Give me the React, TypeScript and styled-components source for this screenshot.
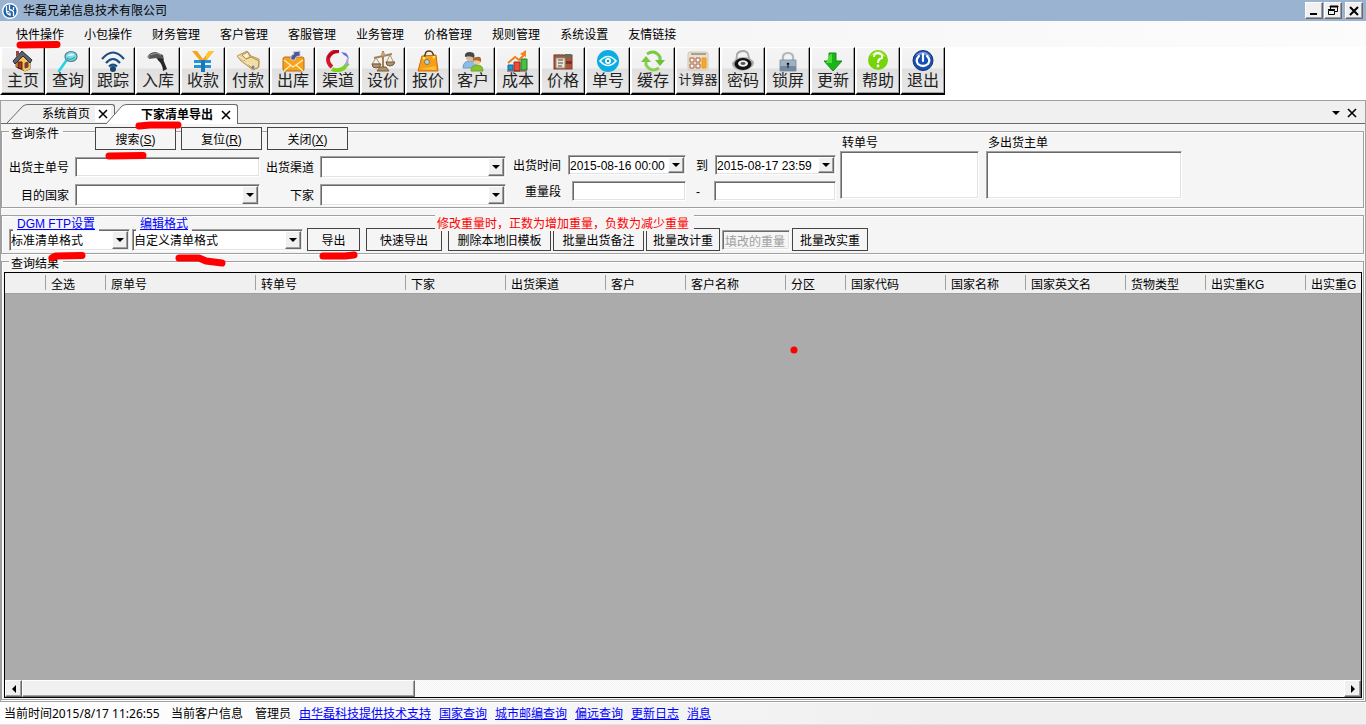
import React from "react";
import styled, { createGlobalStyle, css } from "styled-components";

const formFont = '"Liberation Sans", "Noto Sans CJK SC", sans-serif';
const chromeFont = '"Noto Sans", "Noto Sans CJK SC", sans-serif';

const GlobalStyle = createGlobalStyle`
  *, *::before, *::after { box-sizing: border-box; }
  body { margin: 0; background: #f5f5f5; }
  button, input, select, textarea { font: inherit; color: inherit; border-radius: 0; margin: 0; outline-offset: -3px; }
`;

const sunken = css`
  border: 1px solid;
  border-color: #a0a0a0 #fff #fff #a0a0a0;
  box-shadow: inset 1px 1px #696969, inset -1px -1px #e3e3e3;
  background: #fff;
`;

const raised = css`
  border: 1px solid;
  border-color: #fff #696969 #696969 #fff;
  box-shadow: inset -1px -1px #a0a0a0;
  background: #f0f0f0;
`;

const Window = styled.div`
  position: relative;
  display: flex;
  flex-direction: column;
  min-height: 100vh;
  overflow: hidden;
  background: #fff;
  color: #000;
  font: 12px/14px ${formFont};
  white-space: nowrap;
`;

const TitleBar = styled.header`
  display: flex;
  align-items: center;
  height: 21px;
  padding: 0 3px 0 2px;
  gap: 5px;
  background: #99b3d0;
  font-family: ${chromeFont};
`;

const Title = styled.h1`
  flex: 1;
  margin: 0;
  font-size: 12px;
  font-weight: 400;
`;

const WindowControls = styled.div`
  display: flex;
  gap: 1px;
  & > :last-child { margin-left: 2px; }
`;

const WindowButton = styled.button`
  ${raised}
  display: grid;
  place-items: center;
  width: 18px;
  height: 17px;
  padding: 0;
`;

const MenuBar = styled.nav`
  display: flex;
  align-items: center;
  height: 26px;
  padding: 2px 6px 0;
  background: linear-gradient(90deg, #f0f0f0, #fcfcfc);
  font-family: ${chromeFont};
`;

const MenuItem = styled.button`
  padding: 0 10px;
  border: 0;
  background: none;
`;

const ToolBar = styled.div`
  display: flex;
  height: 53px;
  background: #fff;
`;

const ToolButton = styled.button`
  display: flex;
  flex-direction: column;
  align-items: center;
  width: 45px;
  height: 48px;
  padding: 2px 0 0;
  border: solid;
  border-width: 1px 1px 2px 2px;
  border-color: #fff #000 #000 #fff;
  box-shadow: inset -1px -1px #a0a0a0;
  background: linear-gradient(#f4f4f4 0, #f1f1f1 20px, #e0e0e0 21px, #e8e8e8 100%);
`;

const ToolLabel = styled.span<{ $small?: boolean }>`
  font-family: "Noto Sans CJK SC", sans-serif;
  font-size: ${(p) => (p.$small ? 13 : 16)}px;
  line-height: ${(p) => (p.$small ? 14 : 15)}px;
  color: #222;
`;

const Workspace = styled.main`
  display: flex;
  flex: 1;
  flex-direction: column;
  border: 1px solid #a0a0a0;
  background: #f5f5f5;
`;

const TabStrip = styled.div`
  display: flex;
  align-items: flex-end;
  height: 23px;
  padding-left: 6px;
  background: #f0f0f0;
  border-bottom: 1px solid #696969;
`;

const Tab = styled.div<{ $active?: boolean }>`
  display: flex;
  height: ${(p) => (p.$active ? 20 : 19)}px;
  margin-bottom: ${(p) => (p.$active ? -1 : 0)}px;
  margin-left: ${(p) => (p.$active ? -9 : 0)}px;
  font-weight: ${(p) => (p.$active ? 700 : 400)};
  --tab-fill: ${(p) => (p.$active ? "#fff" : "#f0f0f0")};
`;

const TabBody = styled.div`
  display: flex;
  align-items: center;
  padding: 0 3px 0 14px;
  gap: 5px;
  border: 1px solid #696969;
  border-width: 1px 1px 0 0;
  border-top-right-radius: 3px;
  background: var(--tab-fill);
`;

const TabLabel = styled.button`
  padding: 0;
  border: 0;
  background: none;
  font-weight: inherit;
`;

const GlyphButton = styled.button`
  display: grid;
  place-items: center;
  width: 16px;
  height: 16px;
  padding: 0;
  border: 0;
  background: none;
`;

const TabClose = styled(GlyphButton)`
  background: #fff;
`;

const StripActions = styled.div`
  display: flex;
  align-items: center;
  align-self: center;
  margin-left: auto;
  padding: 2px 5px 0 0;
`;

const groupEdge = css`
  min-width: 0;
  border: 1px solid #a0a0a0;
  box-shadow: 1px 1px #fff, inset 1px 1px #fff;
`;

const Group = styled.fieldset`
  ${groupEdge}
  margin: 0 1px 0 0;
  padding: 0;
`;

const Legend = styled.legend`
  height: 15px;
  margin-left: 7px;
  padding: 4px 4px 0 2px;
  line-height: 12px;
`;

const SearchForm = styled.form`
  display: flex;
  align-items: flex-start;
  margin-top: -12px;
  padding: 0 0 1px 7px;
`;

const ActionRow = styled.div`
  display: flex;
  gap: 5px;
  margin: 0 0 6px 86px;
`;

const PushButton = styled.button<{ $width: number }>`
  width: ${(p) => p.$width}px;
  height: 23px;
  padding: 2px 0 0;
  border: 1px solid #444;
  background: #f5f5f5;
  text-align: center;
`;

const CriteriaGrid = styled.div`
  display: grid;
  grid-template-columns: 60px 185px 48px 186px;
  grid-auto-rows: 22px;
  align-items: center;
  gap: 6px;
  & > label { padding-top: 2px; text-align: right; }
`;

const RangeColumn = styled.div`
  display: flex;
  flex-direction: column;
  gap: 6px;
  margin: 28px 0 0 6px;
`;

const RangeRow = styled.div`
  display: grid;
  grid-template-columns: 49px 118px 1fr auto;
  align-items: center;
  column-gap: 7px;
  width: 324px;
  & > input:nth-of-type(1) { justify-self: end; }
`;

const RangeLabel = styled.label`
  padding-top: 2px;
  text-align: right;
`;

const RangeMark = styled.span`
  padding: 2px 0 0 3px;
`;

const TextBox = styled.input<{ $width: number }>`
  ${sunken}
  width: ${(p) => p.$width}px;
  height: 20px;
  padding: 1px 2px 0;
  &:disabled { background: #f5f5f5; color: #a0a0a0; }
`;

const ComboFrame = styled.span<{ $width: number; $height: number }>`
  ${sunken}
  display: flex;
  position: relative;
  width: ${(p) => p.$width}px;
  height: ${(p) => p.$height}px;
  padding: 1px;
`;

const ComboSelect = styled.select`
  appearance: none;
  flex: 1;
  min-width: 0;
  padding: 1px 0 0;
  border: 0;
  background: none;
`;

const ComboInput = styled.input`
  flex: 1;
  min-width: 0;
  padding: 1px 0 0;
  border: 0;
  background: none;
`;

const DropButton = styled.span`
  ${raised}
  position: absolute;
  top: 1px;
  right: 1px;
  bottom: 1px;
  display: grid;
  place-items: center;
  width: 16px;
  pointer-events: none;
`;

const MemoField = styled.label`
  display: flex;
  flex-direction: column;
  gap: 1px;
  padding-top: 9px;
  margin-left: 4px;
  & + & { margin-left: 7px; }
  span { padding-left: 2px; }
`;

const Memo = styled.textarea<{ $width: number }>`
  ${sunken}
  width: ${(p) => p.$width}px;
  height: 48px;
  padding: 2px;
  resize: none;
`;

const ExportGroup = styled(Group)`
  margin-top: 7px;
`;

const ExportRow = styled.div`
  display: flex;
  gap: 2px;
  padding: 0 0 2px 7px;
`;

const ExportField = styled.div`
  display: flex;
  flex-direction: column;
`;

const Caption = styled.div`
  position: relative;
  z-index: 1;
  align-self: flex-start;
  height: 15px;
  margin: 0 0 -2px 4px;
  padding: 0 4px;
  background: #f5f5f5;
  line-height: 17px;
`;

const Notice = styled.p`
  position: relative;
  z-index: 1;
  align-self: flex-start;
  height: 16px;
  margin: -1px 0 -2px 130px;
  padding: 0 5px 0 2px;
  background: #f5f5f5;
  color: #f00;
  line-height: 18px;
`;

const Actions = styled.div`
  display: flex;
  gap: 6px;
  margin: -1px 0 0 2px;
`;

const EditActions = styled.div`
  display: flex;
  align-items: center;
  gap: 2px;
`;

const Link = styled.a`
  color: #00f;
  text-decoration: underline;
`;

const ResultPanel = styled.section`
  ${groupEdge}
  display: flex;
  flex: 1;
  flex-direction: column;
  margin: 7px 1px 1px 0;
  padding: 0 1px 1px 2px;
`;

const ResultTitle = styled.h2`
  align-self: flex-start;
  height: 15px;
  margin: -5px 0 0 5px;
  padding: 0 4px 0 2px;
  background: #f5f5f5;
  font-size: 12px;
  font-weight: 400;
  line-height: 14px;
`;

const GridFrame = styled.div`
  display: flex;
  flex: 1;
  flex-direction: column;
  min-width: 0;
  border: 1px solid #000;
  background: #ababab;
`;

const GridViewport = styled.div`
  flex: 1;
  overflow: hidden;
`;

const DataTable = styled.table`
  width: 1402px;
  table-layout: fixed;
  border-collapse: collapse;
`;

const HeadCell = styled.th<{ $width: number }>`
  width: ${(p) => p.$width}px;
  height: 20px;
  padding: 4px 0 0 5px;
  border-bottom: 1px solid #a0a0a0;
  background: linear-gradient(#a0a0a0, #a0a0a0) right center / 1px 15px no-repeat #f0f0f0;
  font-weight: 400;
  text-align: left;
`;

const ScrollBar = styled.div`
  display: flex;
  height: 17px;
  background: repeating-conic-gradient(#f0f0f0 0 25%, #fff 0 50%) 0 0 / 2px 2px;
`;

const ScrollArrow = styled.button`
  ${raised}
  display: grid;
  place-items: center;
  width: 17px;
  padding: 0;
`;

const ScrollThumb = styled.div`
  ${raised}
  width: 29%;
  margin-right: auto;
`;

const StatusBar = styled.footer`
  display: flex;
  align-items: center;
  height: 23px;
  padding: 1px 4px 0;
  gap: 8px;
  border-top: 1px solid #fff;
  border-bottom: 1px solid #e0e0e0;
  background: linear-gradient(90deg, #fff, #efefef 70%);
  font-family: ${chromeFont};
`;

const StatusText = styled.span<{ $width: number }>`
  width: ${(p) => p.$width}px;
`;

const Markup = styled.svg`
  position: absolute;
  inset: 0;
  z-index: 2;
  width: 100%;
  height: 100%;
  pointer-events: none;
`;

const CloseGlyph = () => (
  <svg width="10" height="10" viewBox="0 0 10 10" aria-hidden="true">
    <path d="M1 1l8 8M9 1l-8 8" stroke="#000" strokeWidth="1.6" fill="none" />
  </svg>
);

const DownGlyph = () => (
  <svg width="8" height="4" viewBox="0 0 8 4" aria-hidden="true">
    <path d="M0 0h8L4 4z" />
  </svg>
);

const icons: Record<string, React.ReactNode> = {
  home: (
    <>
      <path d="M5 10l7-7 7 7v9l-5 2-9-4z" fill="#f6c64c" stroke="#7b4b16" />
      <path d="M12 4l7 6v9l-6 3V11z" fill="#f3c65a" />
      <path d="M2 11L11 1l10 9-2 3-7-7-8 8z" fill="#5d6070" stroke="#292c38" />
      <path d="M5 4V1h3v3L5 7z" fill="#984636" />
      <path d="M7 12h4v7l-4-1z" fill="#a8352c" stroke="#5c1a19" />
      <path d="M14 13l3-1v5l-3 1z" fill="#5d4260" stroke="#7d3b2a" />
    </>
  ),
  search: (
    <>
      <path d="M10 11L3 21" stroke="#21d3e9" strokeWidth="2.6" strokeLinecap="round" />
      <ellipse cx="15" cy="6.500" rx="6" ry="5" fill="#75dce2" stroke="#5b7b8e" strokeWidth="1.2" />
      <path d="M11 6q4-4 8-1-4 1-8 1z" fill="#d5ffff" />
      <path d="M11 8q4 3 8-1" stroke="#249aad" fill="none" />
    </>
  ),
  wifi: (
    <>
      <path d="M1 9q11-13 22 0M5 13q7-8 14 0M8 16.500q4-4 8 0" fill="none" stroke="#1a4d82" strokeWidth="2.2" />
      <circle cx="12" cy="19" r="3" fill="#164675" />
    </>
  ),
  scanner: (
    <>
      <path d="M2 6q2-4 8-4l7 3 1 5-5 1-3-3-7 1z" fill="#555" />
      <path d="M12 8l5 1 4 10-4 2q0-6-5-11z" fill="#262626" />
      <path d="M4 5l7-2 4 2" fill="none" stroke="#999" />
      <path d="M1 7l3-2v4z" fill="#777" />
    </>
  ),
  yuan: (
    <>
      <path d="M1 1h5l6 8 6-8h5l-9 11h-4z" fill="#f5a41c" />
      <path d="M15 5l3-4h5l-8 9z" fill="#ffc62f" />
      <path d="M3 10h17v3H3zM3 15h17v3H3z" fill="#2494d4" />
      <path d="M10 10h4v12h-4z" fill="#1878ba" />
    </>
  ),
  pay: (
    <>
      <path d="M1 6l10-5 4 5 8 3v8l-6 3L5 11z" fill="#e8cc8f" stroke="#bd9558" />
      <path d="M6 5l6-3 2 5-4 2z" fill="#f8edcc" stroke="#ad8d5f" />
      <path d="M8 10l7-3 8 4-1 7-5 1z" fill="#f0dfa5" stroke="#b1914a" />
      <path d="M2 6l8 4M8 11l9 6" stroke="#fff2cd" />
      <circle cx="17" cy="17" r="1.5" fill="#6d82a5" />
    </>
  ),
  mail: (
    <>
      <rect x="2" y="7" width="21" height="14" rx="2" fill="#f7a21b" stroke="#b86b14" />
      <path d="M3 10l9 7 10-7M3 21l7-6M22 21l-7-6" fill="none" stroke="#fff0ba" strokeWidth="1.2" />
      <path d="M10 10q-1-5 3-6l-1-2 7-1v6l-2-1q-3 1-3 4z" fill="#53558f" stroke="#c9d0ee" />
    </>
  ),
  ring: (
    <>
      <path d="M13 1Q4 1 2 9q0 5 4 8" fill="none" stroke="#d6162a" strokeWidth="4" />
      <path d="M6 19q5 3 12-1l4-5" fill="none" stroke="#7bd321" strokeWidth="4" />
      <path d="M15 2l5 1q3 3 3 7-2-4-5-5z" fill="#686ce1" />
      <path d="M21 8q3 3 0 7l-2 3q0-5 2-10z" fill="#a9a2ea" />
      <path d="M2 8q3-6 11-7" fill="none" stroke="#ac0822" strokeWidth="2" />
    </>
  ),
  scale: (
    <>
      <path d="M12 1v17M3 8l18-4" fill="none" stroke="#a28358" strokeWidth="2" />
      <circle cx="12" cy="4" r="2" fill="#c4a471" />
      <path d="M5 8l-4 6h8zM19 5l-4 8h8z" fill="none" stroke="#af926c" />
      <path d="M1 14h9q-1 4-5 4t-4-4zM15 12h9q-1 4-5 4t-4-4zM9 17h6l3 4H6z" fill="#b19369" stroke="#77593b" />
    </>
  ),
  bag: (
    <>
      <path d="M6 6l14-1 2 16H2z" fill="#f79e16" stroke="#c76b0b" />
      <path d="M8 8l2-6q3-2 6 0l3 6" fill="none" stroke="#533d22" strokeWidth="1.5" />
      <circle cx="8" cy="8" r="1.5" fill="#ffe94f" />
      <circle cx="18" cy="7" r="1.5" fill="#ffe94f" />
      <circle cx="11" cy="12" r="2.5" fill="#c5d3ca" stroke="#657d82" />
      <path d="M5 19l15-3v4z" fill="#ffc12d" />
    </>
  ),
  users: (
    <>
      <path d="M2 18q0-7 7-7t7 7z" fill="#8dbce6" stroke="#629bcb" />
      <circle cx="9" cy="7" r="4.2" fill="#e3b88f" />
      <path d="M4 7q-1-5 5-5 6 0 4 6-4-3-9-1z" fill="#46474c" />
      <path d="M10 21q0-6 6-6t6 6z" fill="#84c32c" stroke="#69a52c" />
      <circle cx="16" cy="11" r="3.6" fill="#efc89a" />
      <path d="M12 11q-1-4 4-4 5-1 4 5-4-3-8-1z" fill="#a36a33" />
    </>
  ),
  chart: (
    <>
      <path d="M2 15h5v5H2z" fill="#2594cf" stroke="#096a9f" />
      <path d="M8 12h6v9H8z" fill="#e94f37" stroke="#9b231e" />
      <path d="M15 9h6v11h-6z" fill="#4dbd45" stroke="#187d29" />
      <path d="M2 13l7-6 4 3 6-6" fill="none" stroke="#ef7e19" strokeWidth="2" />
      <path d="M14 4l6-4v7z" fill="#f28521" />
      <path d="M1 21h20" stroke="#6e3b32" />
    </>
  ),
  board: (
    <>
      <rect x="3" y="5" width="18" height="14" fill="#a9573b" stroke="#8a3228" />
      <path d="M5 8h9v10H5z" fill="#ece5d7" stroke="#9d8c75" />
      <path d="M7 10h5M7 13h5M7 16h4" stroke="#464642" />
      <path d="M5 4v3M8 4v3M11 4v3" stroke="#5f756e" />
      <path d="M14 4h6v3h-6z" fill="#4c7763" />
      <path d="M15 11h6v3h-6z" fill="#7a2f26" />
    </>
  ),
  eye: (
    <>
      <circle cx="12" cy="11" r="11" fill="#0bade3" />
      <path d="M4 11q8-9 16 0-8 9-16 0z" fill="none" stroke="#fff" strokeWidth="1.7" />
      <circle cx="12" cy="11" r="3" fill="#fff" />
      <circle cx="12" cy="11" r="1.2" fill="#0d8fc2" />
    </>
  ),
  refresh: (
    <>
      <path d="M6 4q8-5 13 3v4" fill="none" stroke="#7ac943" strokeWidth="3" />
      <path d="M14 10h10l-5 6z" fill="#6fbe38" />
      <path d="M18 18q-8 5-13-3v-4" fill="none" stroke="#8bd14f" strokeWidth="3" />
      <path d="M0 12h10L5 6z" fill="#7cc644" />
    </>
  ),
  calc: (
    <>
      <rect x="2" y="2" width="20" height="18" rx="2" fill="#e9e0d0" stroke="#d3c8b4" />
      <path d="M5 3h15v2H5z" fill="#a8a18d" />
      <path d="M4 8h4v4H4zM10 8h4v4h-4zM4 14h4v4H4zM10 14h4v4h-4z" fill="#fff5ed" stroke="#a75f4b" />
      <path d="M16 8h4v10h-4z" fill="#f6aa20" stroke="#e89a20" />
    </>
  ),
  combolock: (
    <>
      <path d="M5 13l1-9q2-3 6-3t5 3l2 8" fill="none" stroke="#a8a8a8" strokeWidth="1.8" />
      <path d="M1 13q4-6 11-6t11 5q0 4-4 6-7 5-14 1-4-2-4-6z" fill="#aaa" />
      <ellipse cx="12" cy="14" rx="8.500" ry="6" fill="#111" />
      <ellipse cx="12" cy="13.500" rx="5" ry="3.200" fill="#eee" />
      <ellipse cx="12" cy="13.500" rx="2.500" ry="1.400" fill="#555" />
    </>
  ),
  lock: (
    <>
      <path d="M7 10V6q1-3 5-3t5 3v4" fill="none" stroke="#b5b8ba" strokeWidth="2.2" />
      <path d="M4 10h16v11H4z" fill="#9db1c2" stroke="#8899a6" />
      <path d="M4 16h16v5H4z" fill="#7389a0" />
      <circle cx="12" cy="14" r="1.3" />
      <path d="M12 14v4" stroke="#303b42" strokeWidth="1.5" />
    </>
  ),
  down: (
    <>
      <path d="M8 3h7v8h6l-9 10-9-10h5z" fill="#18b61a" stroke="#1a891d" />
      <path d="M9 4h2v9H5z" fill="#50dc34" />
    </>
  ),
  help: (
    <>
      <circle cx="12" cy="10" r="10" fill="#76d40c" />
      <path d="M4 6Q13-4 20 7 12 2 4 6z" fill="#baf04b" />
      <path d="M8 7q0-4 4-4 5 1 4 5-4 1-4 5" fill="none" stroke="#fff" strokeWidth="2" />
      <circle cx="12" cy="16" r="1.4" fill="#fff" />
    </>
  ),
  power: (
    <>
      <circle cx="12" cy="10.500" r="10" fill="#174fb4" stroke="#173269" />
      <path d="M4 6Q13-3 20 7 12 3 4 6z" fill="#779bdf" />
      <path d="M8 6q-4 4-1 8 5 4 10 0 3-4-1-8M12 4v7" fill="none" stroke="#fff" strokeWidth="2.2" strokeLinecap="round" />
    </>
  ),
};

const menus = ["快件操作", "小包操作", "财务管理", "客户管理", "客服管理", "业务管理", "价格管理", "规则管理", "系统设置", "友情链接"];

const tools: [string, string][] = [
  ["主页", "home"], ["查询", "search"], ["跟踪", "wifi"], ["入库", "scanner"], ["收款", "yuan"], ["付款", "pay"], ["出库", "mail"],
  ["渠道", "ring"], ["设价", "scale"], ["报价", "bag"], ["客户", "users"], ["成本", "chart"], ["价格", "board"], ["单号", "eye"],
  ["缓存", "refresh"], ["计算器", "calc"], ["密码", "combolock"], ["锁屏", "lock"], ["更新", "down"], ["帮助", "help"], ["退出", "power"],
];

const columns: [string, number][] = [
  ["", 41], ["全选", 60], ["原单号", 150], ["转单号", 150], ["下家", 100], ["出货渠道", 100], ["客户", 80], ["客户名称", 100], ["分区", 60],
  ["国家代码", 100], ["国家名称", 80], ["国家英文名", 100], ["货物类型", 80], ["出实重KG", 100], ["出实重G", 101],
];

const footerLinks = ["由华磊科技提供技术支持", "国家查询", "城市邮编查询", "偏远查询", "更新日志", "消息"];

function Combo({ id, width, height = 22, value, label }: { id?: string; width: number; height?: number; value?: string; label?: string }) {
  return (
    <ComboFrame $width={width} $height={height}>
      <ComboSelect id={id} aria-label={label}>
        <option>{value ?? ""}</option>
      </ComboSelect>
      <DropButton><DownGlyph /></DropButton>
    </ComboFrame>
  );
}

function DateBox({ id, width, value, label }: { id?: string; width: number; value: string; label?: string }) {
  return (
    <ComboFrame $width={width} $height={20}>
      <ComboInput id={id} aria-label={label} defaultValue={value} />
      <DropButton><DownGlyph /></DropButton>
    </ComboFrame>
  );
}

function DocumentTab({ title, active }: { title: string; active?: boolean }) {
  const h = active ? 20 : 19;
  return (
    <Tab $active={active}>
      <svg width="21" height={h} viewBox={`0 0 21 ${h}`} aria-hidden="true">
        <path d={`M0 ${h}L16 2Q18 .5 21 .5V${h}z`} fill="var(--tab-fill)" />
        <path d={`M0 ${h}L16 2Q18 .5 21 .5`} fill="none" stroke="#696969" />
      </svg>
      <TabBody>
        <TabLabel type="button">{title}</TabLabel>
        <TabClose type="button" aria-label="关闭"><CloseGlyph /></TabClose>
      </TabBody>
    </Tab>
  );
}

export default function App() {
  return (
    <Window lang="zh-CN">
      <GlobalStyle />
      <TitleBar>
        <svg width="16" height="16" viewBox="0 0 16 16" aria-hidden="true">
          <circle cx="8" cy="8" r="8" fill="#fff" />
          <circle cx="8" cy="8" r="6.6" fill="#1e62aa" />
          <path d="M4.500 3v5q0 3 4 4M7.500 2v4.500q4 1 4 3V13M11.500 4v3M4.500 8l3 1M8 9.500V13" fill="none" stroke="#fff" strokeWidth="1.3" />
        </svg>
        <Title>华磊兄弟信息技术有限公司</Title>
        <WindowControls>
          <WindowButton type="button" aria-label="最小化">
            <svg width="12" height="11" viewBox="0 0 12 11"><path d="M2 8h7v2H2z" /></svg>
          </WindowButton>
          <WindowButton type="button" aria-label="还原">
            <svg width="12" height="11" viewBox="0 0 12 11" fill="none" stroke="#000">
              <path d="M3.500 4V1.500h7v5H8M3 1h8v1H3zM1.500 5.500h6v4h-6zM1 4.500h7" />
            </svg>
          </WindowButton>
          <WindowButton type="button" aria-label="关闭">
            <svg width="10" height="10" viewBox="0 0 10 10"><path d="M1 1l8 8M9 1L1 9" stroke="#000" strokeWidth="2" /></svg>
          </WindowButton>
        </WindowControls>
      </TitleBar>

      <MenuBar>
        {menus.map((m) => <MenuItem type="button" key={m}>{m}</MenuItem>)}
      </MenuBar>

      <ToolBar role="toolbar">
        {tools.map(([label, icon]) => (
          <ToolButton type="button" key={label}>
            <svg width="24" height="22" viewBox="0 0 24 22" aria-hidden="true">{icons[icon]}</svg>
            <ToolLabel $small={label.length > 2}>{label}</ToolLabel>
          </ToolButton>
        ))}
      </ToolBar>

      <Workspace>
        <TabStrip>
          <DocumentTab title="系统首页" />
          <DocumentTab title="下家清单导出" active />
          <StripActions>
            <GlyphButton type="button" aria-label="窗口列表"><DownGlyph /></GlyphButton>
            <GlyphButton type="button" aria-label="关闭"><CloseGlyph /></GlyphButton>
          </StripActions>
        </TabStrip>

        <Group>
          <Legend>查询条件</Legend>
          <SearchForm onSubmit={(e) => e.preventDefault()}>
            <div>
              <ActionRow>
                <PushButton $width={81}>搜索(<u>S</u>)</PushButton>
                <PushButton $width={81} type="reset">复位(<u>R</u>)</PushButton>
                <PushButton $width={81} type="button">关闭(<u>X</u>)</PushButton>
              </ActionRow>
              <CriteriaGrid>
                <label htmlFor="master">出货主单号</label>
                <TextBox id="master" $width={185} />
                <label htmlFor="channel">出货渠道</label>
                <Combo id="channel" width={186} />
                <label htmlFor="country">目的国家</label>
                <Combo id="country" width={185} />
                <label htmlFor="agent">下家</label>
                <Combo id="agent" width={186} />
              </CriteriaGrid>
            </div>
            <RangeColumn>
              <RangeRow>
                <RangeLabel htmlFor="from">出货时间</RangeLabel>
                <DateBox id="from" width={118} value="2015-08-16 00:00" />
                <RangeMark>到</RangeMark>
                <DateBox width={121} value="2015-08-17 23:59" label="到" />
              </RangeRow>
              <RangeRow>
                <RangeLabel htmlFor="weight">重量段</RangeLabel>
                <TextBox id="weight" $width={114} />
                <RangeMark>-</RangeMark>
                <TextBox $width={122} aria-label="重量段上限" />
              </RangeRow>
            </RangeColumn>
            <MemoField><span>转单号</span><Memo $width={139} /></MemoField>
            <MemoField><span>多出货主单</span><Memo $width={196} /></MemoField>
          </SearchForm>
        </Group>

        <ExportGroup>
          <ExportRow>
            <ExportField>
              <Caption><Link href="#ftp">DGM FTP设置</Link></Caption>
              <Combo width={121} value="标准清单格式" label="标准格式" />
            </ExportField>
            <ExportField>
              <Caption><Link href="#format">编辑格式</Link></Caption>
              <Combo width={171} value="自定义清单格式" label="自定义格式" />
            </ExportField>
            <ExportField>
              <Notice>修改重量时，正数为增加重量，负数为减少重量</Notice>
              <Actions>
                <PushButton $width={53} type="button">导出</PushButton>
                <PushButton $width={76} type="button">快速导出</PushButton>
                <EditActions>
                  <PushButton $width={103} type="button">删除本地旧模板</PushButton>
                  <PushButton $width={91} type="button">批量出货备注</PushButton>
                  <PushButton $width={74} type="button">批量改计重</PushButton>
                  <TextBox $width={68} disabled defaultValue="填改的重量" aria-label="填改的重量" />
                  <PushButton $width={76} type="button">批量改实重</PushButton>
                </EditActions>
              </Actions>
            </ExportField>
          </ExportRow>
        </ExportGroup>

        <ResultPanel>
          <ResultTitle>查询结果</ResultTitle>
          <GridFrame>
            <GridViewport>
              <DataTable>
                <thead>
                  <tr>{columns.map(([name, width]) => <HeadCell key={name} $width={width} scope="col">{name}</HeadCell>)}</tr>
                </thead>
              </DataTable>
            </GridViewport>
            <ScrollBar>
              <ScrollArrow type="button" aria-label="向左滚动">
                <svg width="4" height="8" viewBox="0 0 4 8"><path d="M4 0v8L0 4z" /></svg>
              </ScrollArrow>
              <ScrollThumb />
              <ScrollArrow type="button" aria-label="向右滚动">
                <svg width="4" height="8" viewBox="0 0 4 8"><path d="M0 0v8l4-4z" /></svg>
              </ScrollArrow>
            </ScrollBar>
          </GridFrame>
        </ResultPanel>
      </Workspace>

      <StatusBar>
        <StatusText $width={159}>当前时间2015/8/17 11:26:55</StatusText>
        <StatusText $width={76}>当前客户信息</StatusText>
        <StatusText $width={36}>管理员</StatusText>
        {footerLinks.map((l) => <Link key={l} href="#info">{l}</Link>)}
      </StatusBar>

      <Markup aria-hidden="true">
        <g fill="none" stroke="#f00" strokeWidth="7" strokeLinecap="round" strokeLinejoin="round">
          <path d="M20 45L57 44.500" />
          <path d="M139 126L150 125L178 125" />
          <path d="M109 156L143 155.500" />
          <path d="M52 258L56 256L82 255.500" />
          <path d="M179 258L199 258L206 261L222 263" />
          <path d="M323 256L345 256L354 255" />
        </g>
        <circle cx="794" cy="350" r="3.500" fill="#f00" />
      </Markup>
    </Window>
  );
}
